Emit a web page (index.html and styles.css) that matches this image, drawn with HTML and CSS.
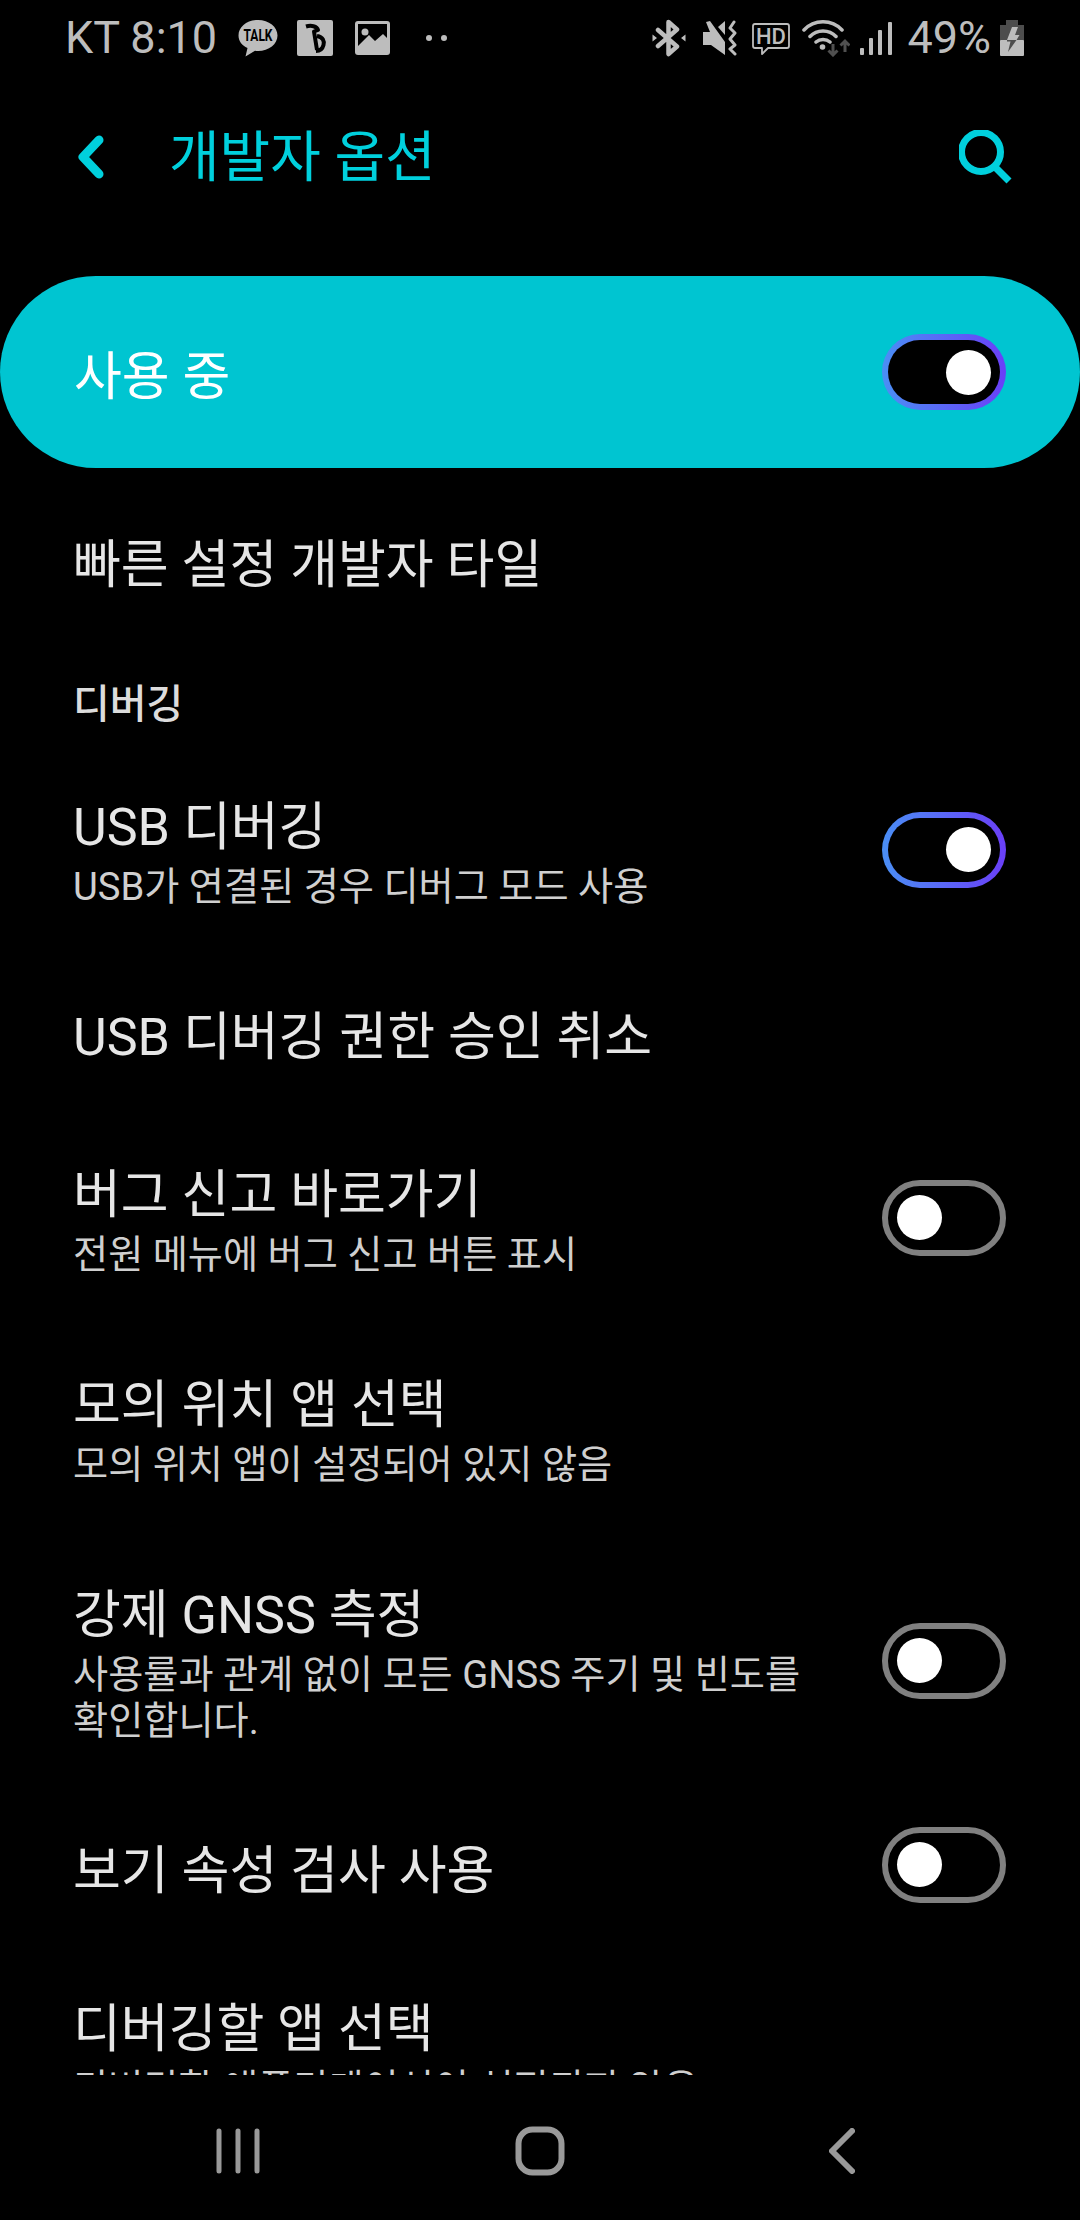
FILE: index.html
```html
<!DOCTYPE html>
<html lang="ko">
<head>
<meta charset="utf-8">
<title>개발자 옵션</title>
<link rel="stylesheet" href="styles.css">
</head>
<body>
<div class="phone">
  <header class="status">
    <span class="status-text">KT 8:10</span>
    <svg class="ic ic-talk" viewBox="0 0 40 38" width="40" height="38"><path class="fill" d="M20 1C9 1 0.500 8 0.500 16.500C0.500 22 4 26.500 9.500 29L7.500 37.500L17 31.700C18 31.900 19 32 20 32C31 32 39.500 25 39.500 16.500C39.500 8 31 1 20 1Z"/><text class="talk-label" text-anchor="middle" transform="translate(20 22) scale(1 1.300)">TALK</text></svg>
    <svg class="ic ic-b" viewBox="0 0 36 36" width="36" height="36"><rect class="fill" width="36" height="36" rx="2"/><path class="b-mark" d="M9 6.500C14 5 20 6 21 10L17 11.500L20 30M20 16C26 17 27.500 21 26.500 25C25.500 29 23 31 19 31"/></svg>
    <svg class="ic ic-image" viewBox="0 0 35 34" width="35" height="34"><rect class="fill" width="35" height="34" rx="3"/><rect class="cut" x="3" y="3" width="29" height="24"/><circle class="fill" cx="10" cy="11" r="3.500"/><path class="fill" d="M3 25L14 14L20 20L28 13L32 17V34H3Z"/></svg>
    <span class="dots"><i class="dot"></i><i class="dot"></i></span>
    <span class="status-gap"></span>
    <svg class="ic ic-bt" viewBox="0 0 34 38" width="34" height="38"><path class="line bt" d="M6 11L25 27.500L16.500 35V3L25 10.500L6 27"/><path class="fill" d="M0.500 15.500L5 19L0.500 22.500ZM33.500 15.500L29 19L33.500 22.500Z"/></svg>
    <svg class="ic ic-mute" viewBox="0 0 36 36" width="36" height="36"><path class="fill" d="M3 2L7 1L22 22V35L8 25H0V12H7Z"/><path class="fill" d="M15 7L22 1V15Z"/><path class="line thin" d="M31 2L27 8L32 13L27 19L32 25L27 29L32 34"/></svg>
    <svg class="ic ic-hd" viewBox="0 0 38 33" width="38" height="33"><path class="line hair" d="M3 2H35Q37 2 37 4V24Q37 26 35 26H16L10 32V26H3Q1 26 1 24V4Q1 2 3 2Z"/><text class="hd-label" x="19" y="22" text-anchor="middle">HD</text></svg>
    <svg class="ic ic-wifi" viewBox="0 0 48 37" width="48" height="37"><path class="line wifi" d="M2 10C12 -1 30 -1 40 10M8 16.500C15 9 27 9 34 16.500M14 22C18 18.500 24 18.500 28 22"/><circle class="fill" cx="20.500" cy="27" r="2.800"/><path class="arrow" d="M31 24V35M26.500 30.500L31 35L35.500 30.500M43 32V21M38.500 25.500L43 21L47.500 25.500"/></svg>
    <svg class="ic ic-signal" viewBox="0 0 32 34" width="32" height="34"><rect class="fill" x="0" y="27" width="4" height="7" rx="1"/><rect class="fill" x="9" y="17" width="4" height="17" rx="1"/><rect class="fill" x="18" y="9" width="4" height="25" rx="1"/><rect class="fill" x="28" y="1" width="4" height="33" rx="1"/></svg>
    <span class="status-text pct">49%</span>
    <svg class="ic ic-batt" viewBox="0 0 24 36" width="24" height="36"><path class="dim2" d="M6 0H18V5H24V21H0V5H6Z"/><rect class="fill" y="20" width="24" height="16" rx="1"/><path class="fill" d="M12 7H18L15 15H19.500L16.500 20H7Z"/><path class="dim2" d="M7 20H16.500L8 32L10.500 21.500H7Z"/></svg>
  </header>

  <div class="appbar">
    <svg class="chevron" viewBox="0 0 26 44" width="26" height="44"><path d="M21 5L5 22L21 39"/></svg>
    <h1 class="title">개발자 옵션</h1>
    <svg class="search" viewBox="0 0 53 54" width="53" height="54"><circle cx="22" cy="22" r="19.500"/><path d="M35 36L50 51"/></svg>
  </div>

  <div class="master">
    <span class="master-label">사용 중</span>
    <span class="toggle on"><i class="knob"></i></span>
  </div>

  <main class="list">
    <div class="row first"><div class="copy"><div class="row-title">빠른 설정 개발자 타일</div></div></div>
    <div class="section">디버깅</div>
    <div class="row">
      <div class="copy"><div class="row-title">USB 디버깅</div><div class="row-sub">USB가 연결된 경우 디버그 모드 사용</div></div>
      <span class="toggle on"><i class="knob"></i></span>
    </div>
    <div class="row"><div class="copy"><div class="row-title">USB 디버깅 권한 승인 취소</div></div></div>
    <div class="row">
      <div class="copy"><div class="row-title">버그 신고 바로가기</div><div class="row-sub">전원 메뉴에 버그 신고 버튼 표시</div></div>
      <span class="toggle"><i class="knob"></i></span>
    </div>
    <div class="row"><div class="copy"><div class="row-title">모의 위치 앱 선택</div><div class="row-sub">모의 위치 앱이 설정되어 있지 않음</div></div></div>
    <div class="row">
      <div class="copy"><div class="row-title">강제 GNSS 측정</div><div class="row-sub">사용률과 관계 없이 모든 GNSS 주기 및 빈도를 확인합니다.</div></div>
      <span class="toggle"><i class="knob"></i></span>
    </div>
    <div class="row compact">
      <div class="copy"><div class="row-title">보기 속성 검사 사용</div></div>
      <span class="toggle"><i class="knob"></i></span>
    </div>
    <div class="row"><div class="copy"><div class="row-title">디버깅할 앱 선택</div><div class="row-sub">디버깅할 애플리케이션이 설정되지 않음</div></div></div>
  </main>

  <nav class="navbar">
    <svg class="nav-ic" viewBox="0 0 44 46" width="44" height="46"><path class="bars" d="M3 3V43M22 3V43M41 3V43"/></svg>
    <svg class="nav-ic" viewBox="0 0 50 50" width="50" height="50"><rect x="3.500" y="3.500" width="43" height="43" rx="14"/></svg>
    <svg class="nav-ic" viewBox="0 0 26 46" width="26" height="46"><path d="M23 3L3 23L23 43"/></svg>
  </nav>
</div>
</body>
</html>
```
FILE: styles.css
```css
* { box-sizing: border-box; }
html, body { margin: 0; padding: 0; background: #000; }
body { font-family: Roboto, "Noto Sans CJK KR", sans-serif; }
.phone { width: 1080px; height: 2220px; background: #000; display: flex; flex-direction: column; overflow: hidden; }

.status { height: 76px; flex: none; display: flex; align-items: center; padding: 0 56px 0 65px; color: #bdbdbd; }
.status-text { font-size: 45px; line-height: 76px; }
.status-gap { flex: 1; }
.ic { flex: none; display: block; }
.ic-talk { margin-left: 21px; }
.ic-b { margin-left: 19px; }
.ic-image { margin-left: 22px; }
.ic-bt { margin-right: 17px; }
.ic-mute { margin-right: 13px; }
.ic-hd { margin-right: 12px; }
.ic-wifi { margin-right: 10px; }
.ic-signal { margin-right: 15px; }
.pct { margin-right: 9px; }
.dots { display: flex; gap: 9px; margin-left: 36px; }
.dot { width: 6px; height: 6px; border-radius: 50%; background: #bdbdbd; display: block; }
.fill { fill: #bdbdbd; }
.cut { fill: #000; }
.dim2 { fill: #4d4d4d; }
.line { fill: none; stroke: #bdbdbd; stroke-linecap: round; stroke-linejoin: round; }
.bt { stroke-width: 4.500; }
.thin { stroke-width: 3; }
.hair { stroke-width: 1.800; }
.wifi { stroke-width: 3.500; }
.arrow { fill: none; stroke: #505050; stroke-width: 3; }
.b-mark { fill: none; stroke: #000; stroke-width: 4; stroke-linejoin: round; }
.talk-label { font: 700 12px Roboto, sans-serif; fill: #000; }
.hd-label { font: 500 22px Roboto, sans-serif; fill: #bdbdbd; }

.appbar { height: 200px; flex: none; display: flex; align-items: center; padding: 0 68px 38px 78px; }
.chevron { flex: none; }
.chevron path { fill: none; stroke: #00d0dd; stroke-width: 9; stroke-linecap: round; stroke-linejoin: round; }
.title { flex: 1; margin: 0 0 0 65px; font-size: 55px; font-weight: 400; line-height: 70px; color: #00d0dd; }
.search { flex: none; }
.search circle, .search path { fill: none; stroke: #00d0dd; stroke-width: 7; }

.master { height: 192px; flex: none; background: #00c5d1; border-radius: 96px; display: flex; align-items: center; justify-content: space-between; padding: 0 74px; }
.master-label { font-size: 52px; color: #fff; }

.toggle { flex: none; width: 124px; height: 76px; border: 6px solid #808080; border-radius: 38px; background: #000; display: flex; align-items: center; justify-content: flex-start; padding: 0 9px; }
.toggle.on { border-color: transparent; background: linear-gradient(#000, #000) padding-box, linear-gradient(90deg, #4a8ff5, #6a3ff8) border-box; justify-content: flex-end; }
.knob { width: 45px; height: 45px; border-radius: 50%; background: #fff; display: block; }

.list { flex: 1; min-height: 0; overflow: hidden; }
.row { display: flex; align-items: center; justify-content: space-between; gap: 40px; padding: 46px 74px 43px 73px; }
.row.first { margin-top: 13px; }
.row .toggle { margin: -5px 0; }
.row.compact .toggle { margin: -8px 0 -2px; }
.copy { flex: 1; min-width: 0; word-break: keep-all; }
.row-title { font-size: 52px; line-height: 60px; padding-top: 9px; color: #e6e6e6; }
.row-sub { font-size: 38.200px; line-height: 46px; margin-top: 6px; color: #cfcfcf; }
.section { height: 104px; padding: 27px 73px 0; font-size: 40px; line-height: 77px; font-weight: 500; color: #dcdcdc; }

.navbar { height: 145px; flex: none; display: grid; grid-template-columns: repeat(3, 1fr); padding: 7px 87px 0; place-items: center; }
.nav-ic path, .nav-ic rect { fill: none; stroke: #999; stroke-width: 6; stroke-linecap: round; stroke-linejoin: round; }
.nav-ic .bars { stroke-width: 5; }
```
